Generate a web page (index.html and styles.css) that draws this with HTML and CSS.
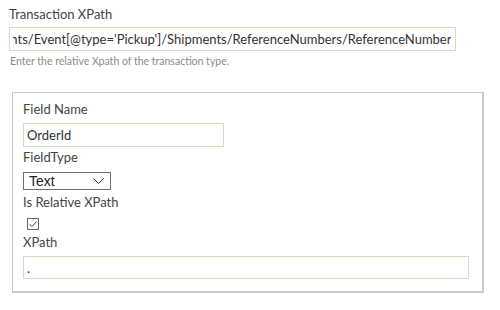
FILE: index.html
```html
<!DOCTYPE html>
<html lang="en">
<head>
    <meta charset="UTF-8">
    <meta name="viewport" content="width=device-width, initial-scale=1.0">
    <title>Transaction XPath</title>
    <link rel="stylesheet" href="styles.css">
</head>
<body>

    <div class="page">
        <label class="field-label" for="transaction-xpath">Transaction XPath</label>
        <input type="text" id="transaction-xpath" class="text-input path-input"
               value="/Shipment/Events/Event[@type='Pickup']/Shipments/ReferenceNumbers/ReferenceNumber">
        <p class="hint">Enter the relative Xpath of the transaction type.</p>

        <div class="group">
            <label class="field-label first" for="field-name">Field Name</label>
            <input type="text" id="field-name" class="text-input name-input" value="OrderId">

            <label class="field-label type-label" for="field-type">FieldType</label>
            <div class="select-wrap">
                <select id="field-type" class="type-select">
                    <option>Text</option>
                    <option>Number</option>
                    <option>Date</option>
                </select>
                <svg class="chevron" width="11" height="6" viewBox="0 0 11 6">
                    <path d="M0.5 0.5 L5.5 5.5 L10.5 0.5" fill="none" stroke="#333" stroke-width="1"/>
                </svg>
            </div>

            <label class="field-label relative-label" for="is-relative">Is Relative XPath</label>
            <label class="check-box" for="is-relative">
                <input type="checkbox" id="is-relative" checked>
                <svg width="10" height="10" viewBox="0 0 10 10">
                    <path d="M1.5 5 L4 7.5 L8.5 2.5" fill="none" stroke="#444" stroke-width="1"/>
                </svg>
            </label>

            <label class="field-label xpath-label" for="xpath">XPath</label>
            <input type="text" id="xpath" class="text-input xpath-input" value=".">
        </div>
    </div>

    <script>
        // mostrar el final de la ruta, como cuando el campo tiene el foco
        var path = document.getElementById('transaction-xpath');
        path.scrollLeft = path.scrollWidth;
    </script>

</body>
</html>
```

FILE: styles.css
```css
body {
    margin: 0;
    font-family: Lato, "Open Sans", sans-serif;
    font-size: 13px;
    color: #444;
    background: #fff;
}

.page {
    padding: 6px 0 0 9px;
}

.field-label {
    display: block;
    line-height: 16px;
    margin-bottom: 5px;
}

.text-input {
    box-sizing: border-box;
    display: block;
    height: 24px;
    padding: 0 4px 0 3px;
    border: 1px solid #ddd9c6;
    font-family: Lato, "Open Sans", sans-serif;
    font-size: 13px;
    color: #333;
    background: #fff;
    outline: none;
}

.path-input {
    width: 447px;
}

.hint {
    margin: 3px 0 0 1px;
    font-size: 10.5px;
    line-height: 14px;
    color: #8c8c8c;
}

.group {
    margin: 24px 16px 0 3px;
    padding: 8px 13px 12px 10px;
    border: 1px solid #cbcbcb;
    border-right-width: 2px;
    border-bottom-width: 2px;
}

.group .first {
    margin-bottom: 6px;
}

.name-input {
    width: 201px;
}

.type-label {
    margin-top: 2px;
    margin-bottom: 7px;
}

.select-wrap {
    position: relative;
    width: 88px;
}

.type-select {
    appearance: none;
    -webkit-appearance: none;
    box-sizing: border-box;
    display: block;
    width: 88px;
    height: 18px;
    margin: 0;
    padding: 0 0 0 5px;
    border: 1px solid #707070;
    border-radius: 0;
    background: #fff;
    font-family: "Liberation Sans", Arial, sans-serif;
    font-size: 14px;
    line-height: 16px;
    color: #222;
}

.chevron {
    position: absolute;
    right: 7px;
    top: 6px;
    pointer-events: none;
}

.relative-label {
    margin-top: 4px;
    margin-bottom: 8px;
}

.check-box {
    position: relative;
    display: block;
    width: 12px;
    height: 12px;
    margin-left: 4px;
}

.check-box input {
    appearance: none;
    -webkit-appearance: none;
    box-sizing: border-box;
    display: block;
    width: 12px;
    height: 12px;
    margin: 0;
    border: 1px solid #6b6b6b;
    background: #fff;
}

.check-box svg {
    position: absolute;
    left: 1px;
    top: 1px;
    pointer-events: none;
}

.xpath-label {
    margin-top: 4px;
    margin-bottom: 6px;
}

.xpath-input {
    width: 100%;
    height: 23px;
}
```
